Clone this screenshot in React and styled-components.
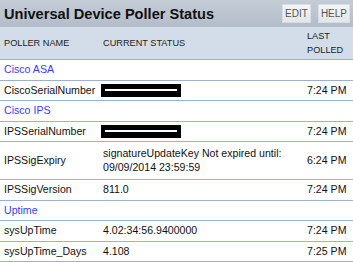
import React from "react"
import styled, { createGlobalStyle } from "styled-components"

const GlobalStyle = createGlobalStyle`
  body {
    margin: 0;
    background: #ffffff;
    font-family: "Liberation Sans", Arial, sans-serif;
  }
`

const Panel = styled.div`
  width: 353px;
  background: #ffffff;
  color: #111111;
`

const TitleBar = styled.div`
  display: flex;
  align-items: center;
  justify-content: space-between;
  height: 27px;
  padding: 0 3px 0 4px;
  box-sizing: border-box;
  background: linear-gradient(#c4ccd6, #b3bdc9);
`

const Title = styled.h1`
  margin: 0;
  font-size: 14.6px;
  font-weight: bold;
  color: #111111;
`

const Actions = styled.div`
  display: flex;
  gap: 7px;
`

const ActionButton = styled.span`
  display: block;
  padding: 3px 2px;
  font-size: 10px;
  line-height: 11px;
  color: #555555;
  background: linear-gradient(#f4f5f7, #e3e6ea);
  border: 1px solid #d8dde3;
`

const Row = styled.div`
  display: grid;
  grid-template-columns: 99px 204px 1fr;
  align-items: center;
  padding: ${({ $tall }) => ($tall ? "5px" : "3px")} 0 ${({ $tall }) => ($tall ? "5px" : "3px")} 4px;
  border-bottom: 1px solid #9cb0d0;
  font-size: 10.6px;
  line-height: 13.5px;
`

const HeaderRow = styled(Row)`
  padding: 2px 0 2px 4px;
  background: #d3dde9;
  font-size: 9.2px;
  line-height: 14px;
  color: #222222;
`

const GroupLink = styled.a`
  grid-column: 1 / -1;
  color: #3a3aff;
  text-decoration: none;
`

const Redacted = styled.span`
  display: flex;
  align-items: center;
  width: 80px;
  height: 13px;
  margin-left: -2px;
  background: #000000;
  padding: 0 4px;
  box-sizing: border-box;

  &::after {
    content: "";
    display: block;
    width: 100%;
    height: 2px;
    background: #ffffff;
  }
`

const groups = [
  {
    name: "Cisco ASA",
    rows: [{ name: "CiscoSerialNumber", redacted: true, time: "7:24 PM" }],
  },
  {
    name: "Cisco IPS",
    rows: [
      { name: "IPSSerialNumber", redacted: true, time: "7:24 PM" },
      {
        name: "IPSSigExpiry",
        status: "signatureUpdateKey Not expired until: 09/09/2014 23:59:59",
        time: "6:24 PM",
        tall: true,
      },
      { name: "IPSSigVersion", status: "811.0", time: "7:24 PM" },
    ],
  },
  {
    name: "Uptime",
    rows: [
      { name: "sysUpTime", status: "4.02:34:56.9400000", time: "7:24 PM" },
      { name: "sysUpTime_Days", status: "4.108", time: "7:25 PM" },
    ],
  },
]

export default function App() {
  return (
    <Panel>
      <GlobalStyle />
      <TitleBar>
        <Title>Universal Device Poller Status</Title>
        <Actions>
          <ActionButton>EDIT</ActionButton>
          <ActionButton>HELP</ActionButton>
        </Actions>
      </TitleBar>
      <HeaderRow>
        <span>POLLER NAME</span>
        <span>CURRENT STATUS</span>
        <span>
          LAST
          <br />
          POLLED
        </span>
      </HeaderRow>
      {groups.map(group => (
        <React.Fragment key={group.name}>
          <Row>
            <GroupLink href="#">{group.name}</GroupLink>
          </Row>
          {group.rows.map(row => (
            <Row key={row.name} $tall={row.tall}>
              <span>{row.name}</span>
              {row.redacted ? <Redacted /> : <span>{row.status}</span>}
              <span>{row.time}</span>
            </Row>
          ))}
        </React.Fragment>
      ))}
    </Panel>
  )
}
